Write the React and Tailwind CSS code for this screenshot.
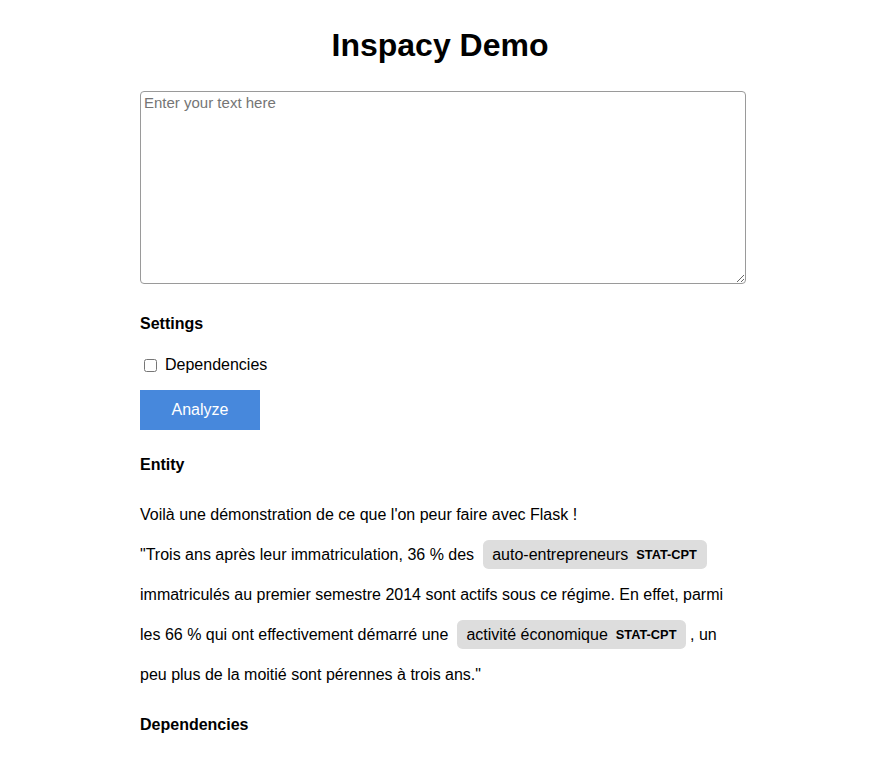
import React from "react";

function Ent({ text, label }) {
  return (
    <mark className="bg-[#ddd] text-black px-[9.6px] py-[6px] mx-[4px] leading-none rounded-[5.6px]">
      {text}
      <span className="text-[12.8px] font-bold leading-none align-middle ml-[8px]">{label}</span>
    </mark>
  );
}

export default function App() {
  return (
    <div className="w-[880px] bg-white text-black font-['Liberation_Sans',Arial,sans-serif] text-[16px]">
      <div className="mx-auto w-[600px] pb-[40px]">
        <h1 className="mt-[27px] mb-[27px] text-center text-[32px] font-bold leading-[37px]">
          Inspacy Demo
        </h1>
        <textarea
          placeholder="Enter your text here"
          className="block w-[606px] h-[193px] border border-[#9a9a9a] rounded-[4px] px-[3px] py-[2px] text-[15px] leading-[normal] font-['Liberation_Sans',Arial,sans-serif] placeholder:text-[#757575] outline-none"
        />
        <h4 className="mt-[31px] font-bold leading-[18px]">Settings</h4>
        <label className="mt-[23px] flex items-center leading-[18px]">
          <input type="checkbox" className="ml-[4px] mr-[8px] w-[13px] h-[13px]" />
          Dependencies
        </label>
        <button className="mt-[16px] block w-[120px] h-[40px] bg-[#4788dc] text-white text-[16px] text-center">
          Analyze
        </button>
        <h4 className="mt-[26px] font-bold leading-[18px]">Entity</h4>
        <div className="mt-[21px] leading-[40px]">
          Voilà une démonstration de ce que l'on peur faire avec Flask !
          <br />
          "Trois ans après leur immatriculation, 36 % des <Ent text="auto-entrepreneurs" label="STAT-CPT" />
          {" "}immatriculés au premier semestre 2014 sont actifs sous ce régime. En effet, parmi les 66 % qui ont effectivement démarré une <Ent text="activité économique" label="STAT-CPT" />, un peu plus de la moitié sont pérennes à trois ans."
        </div>
        <h4 className="mt-[21px] font-bold leading-[18px]">Dependencies</h4>
      </div>
    </div>
  );
}
